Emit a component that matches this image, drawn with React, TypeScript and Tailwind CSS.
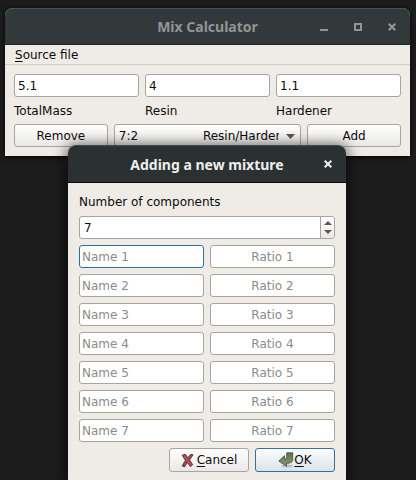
import { useState } from "react";

const fieldClass =
  "block h-[23px] w-full min-w-0 rounded-[3px] border bg-white outline-none";
const buttonClass =
  "flex items-center justify-center rounded-[3px] border border-[#a8a5a1] bg-linear-to-b from-[#fefefe] to-[#ebe9e7]";

const results = [
  { id: "total", label: "TotalMass", value: "5.1" },
  { id: "resin", label: "Resin", value: "4" },
  { id: "hardener", label: "Hardener", value: "1.1" },
];

function CloseIcon() {
  return (
    <svg width="8" height="8" viewBox="0 0 8 8" fill="none" stroke="currentColor" strokeWidth="2">
      <path d="M.7 .7 7.3 7.3M7.3 .7 .7 7.3" />
    </svg>
  );
}

function CancelIcon() {
  return (
    <svg width="14" height="15" viewBox="0 0 14 15">
      <path
        d="M1.2 2.2 4.3 1.2l2.5 3.5L9.6 1.4l2.4.4-3.4 5.3 3.1 4.6-2.3 1.9-3.1-4-2.8 4.4-2.4-1.2 3.3-5.4z"
        fill="#a94453"
        stroke="#4a3439"
        strokeWidth=".9"
        strokeLinejoin="round"
      />
      <path d="m3 2.6 6.6 9.2" stroke="#bf5966" strokeWidth="1" />
    </svg>
  );
}

function OkIcon() {
  return (
    <svg width="16" height="16" viewBox="0 0 16 16">
      <defs>
        <linearGradient id="ok-arrow" x1="0" y1="0" x2="0" y2="1">
          <stop offset="0" stopColor="#607052" />
          <stop offset="1" stopColor="#879773" />
        </linearGradient>
      </defs>
      <ellipse cx="9" cy="14" rx="6" ry="1.6" fill="#000" opacity=".16" />
      <path
        d="M8.7 .8h6v7q0 3.4-6.2 3.6v2.8L.8 9l5.7-5.2v3h2.2z"
        fill="url(#ok-arrow)"
        stroke="#4c5744"
        strokeWidth=".9"
        strokeLinejoin="round"
      />
    </svg>
  );
}

function MainWindow() {
  return (
    <main className="mt-2 mr-[6px] ml-[5px] overflow-hidden rounded-t-lg bg-[#efebe7] shadow-[0_1px_5px_#000]">
      <header className="relative flex h-[37px] items-center justify-center border-t border-b border-t-[#485053] border-b-[#202527] bg-[#33393b] text-[#929594]">
        <h1 className="font-['Noto_Sans',sans-serif] text-[14px] font-bold">Mix Calculator</h1>
        <div className="absolute inset-y-0 right-[14px] flex items-center gap-[26px]">
          <button type="button" aria-label="Minimize" className="flex h-2 items-end">
            <span className="block h-0.5 w-2 bg-current" />
          </button>
          <button type="button" aria-label="Maximize" className="size-2 border-2 border-current" />
          <button type="button" aria-label="Close">
            <CloseIcon />
          </button>
        </div>
      </header>
      <nav className="flex h-5 items-center border-b border-[#d2cfcb] px-[10px]">
        <button type="button">
          <span className="underline underline-offset-2">S</span>ource file
        </button>
      </nav>
      <div className="flex flex-col gap-[5px] p-[9px]">
        <div className="grid grid-cols-3 gap-[6px]">
          {results.map((r) => (
            <div key={r.id} className="flex flex-col gap-[6px]">
              <input
                id={r.id}
                defaultValue={r.value}
                className={`${fieldClass} border-[#a8a5a1] px-[3px]`}
              />
              <label htmlFor={r.id} className="leading-4">
                {r.label}
              </label>
            </div>
          ))}
        </div>
        <div className="grid grid-cols-[1fr_2fr_1fr] gap-[6px]">
          <button type="button" className={`${buttonClass} h-[23px]`}>
            Remove
          </button>
          <div className="relative min-w-0">
            <select
              aria-label="Mixture"
              className="block h-[23px] w-full appearance-none rounded-[3px] border border-[#a8a5a1] bg-linear-to-b from-[#fefefe] to-[#ebe9e7] pr-[21px] pl-[4px] outline-none"
            >
              <option>{"7:2" + "\u00a0".repeat(17) + "Resin/Hardener"}</option>
            </select>
            <svg
              className="pointer-events-none absolute top-[10px] right-[6px]"
              width="9"
              height="5"
              viewBox="0 0 9 5"
            >
              <path d="M0 0h9L4.5 5z" fill="#5b5957" />
            </svg>
          </div>
          <button type="button" className={`${buttonClass} h-[23px]`}>
            Add
          </button>
        </div>
      </div>
    </main>
  );
}

function MixtureDialog() {
  const [count, setCount] = useState(7);
  const rows = Array.from({ length: count }, (_, i) => i + 1);
  return (
    <section
      role="dialog"
      aria-labelledby="dialog-title"
      className="absolute top-[145px] left-[68px] w-[278px] rounded-t-lg bg-[#efebe7] shadow-[0_2px_14px_2px_#000000a0]"
    >
      <header className="relative flex h-[38px] items-center justify-center rounded-t-lg border-t border-b border-t-[#434a4d] border-b-[#080a0a] bg-[#2b3032] text-[#eeeeec]">
        <h2 id="dialog-title" className="font-['Noto_Sans',sans-serif] text-[14px] font-bold">
          Adding a new mixture
        </h2>
        <button type="button" aria-label="Close" className="absolute right-[14px]">
          <CloseIcon />
        </button>
      </header>
      <form className="flex flex-col gap-[6px] p-[11px]" onSubmit={(e) => e.preventDefault()}>
        <label htmlFor="count" className="leading-4">
          Number of components
        </label>
        <div className="flex h-[23px] overflow-hidden rounded-[3px] border border-[#a8a5a1] bg-white">
          <input
            id="count"
            inputMode="numeric"
            value={count}
            onChange={(e) => setCount(Number(e.target.value) || 0)}
            className="min-w-0 flex-1 px-[4px] outline-none"
          />
          <div className="flex w-[14px] flex-col justify-center gap-[5px] border-l border-[#a8a5a1] bg-linear-to-b from-[#fefefe] to-[#ebe9e7]">
            <button
              type="button"
              aria-label="Increase"
              className="flex justify-center"
              onClick={() => setCount(count + 1)}
            >
              <svg width="8" height="4" viewBox="0 0 8 4">
                <path d="M0 4h8L4 0z" fill="#5b5957" />
              </svg>
            </button>
            <button
              type="button"
              aria-label="Decrease"
              className="flex justify-center"
              onClick={() => setCount(Math.max(1, count - 1))}
            >
              <svg width="8" height="4" viewBox="0 0 8 4">
                <path d="M0 0h8L4 4z" fill="#5b5957" />
              </svg>
            </button>
          </div>
        </div>
        {rows.map((n) => (
          <div key={n} className="grid grid-cols-2 gap-[6px]">
            <input
              aria-label={`Name ${n}`}
              placeholder={`Name ${n}`}
              className={`${fieldClass} px-[2px] placeholder:text-[#8b8b8b] ${n === 1 ? "border-[#30729f]" : "border-[#a8a5a1]"}`}
            />
            <input
              aria-label={`Ratio ${n}`}
              placeholder={`Ratio ${n}`}
              className={`${fieldClass} border-[#a8a5a1] px-[2px] text-center placeholder:text-[#8b8b8b]`}
            />
          </div>
        ))}
        <div className="flex justify-end gap-[6px]">
          <button type="button" className={`${buttonClass} h-6 w-20 gap-0.5`}>
            <CancelIcon />
            <span>
              <span className="underline underline-offset-2">C</span>ancel
            </span>
          </button>
          <button
            type="submit"
            className="flex h-6 w-20 items-center justify-center rounded-[3px] border border-[#30729f] bg-linear-to-b from-[#fbfcfd] to-[#dce3e7]"
          >
            <OkIcon />
            <span>
              <span className="underline underline-offset-2">O</span>K
            </span>
          </button>
        </div>
      </form>
    </section>
  );
}

export default function App() {
  return (
    <div className="relative flow-root h-screen overflow-hidden bg-[#1c1c1c] font-['DejaVu_Sans',sans-serif] text-[12px] text-[#0c0c0c]">
      <MainWindow />
      <MixtureDialog />
    </div>
  );
}
